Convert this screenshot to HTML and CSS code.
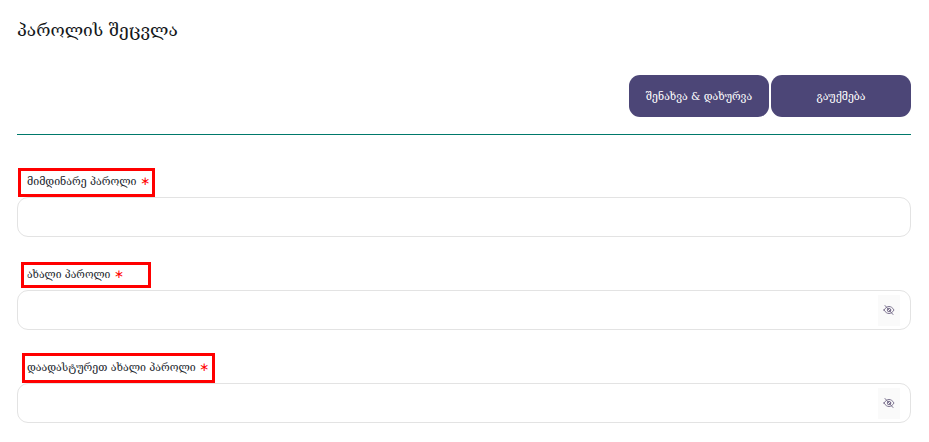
FILE: index.html
```html
<!DOCTYPE html>
<html lang="ka">
<head>
<meta charset="utf-8">
<title>პაროლის შეცვლა</title>
<link rel="stylesheet" href="styles.css">
</head>
<body>
<main class="page">
  <h1 class="title">პაროლის შეცვლა</h1>
  <div class="actions">
    <button class="btn" type="button">შენახვა &amp; დახურვა</button>
    <button class="btn" type="button">გაუქმება</button>
  </div>
  <hr class="rule">
  <form class="form">
    <div class="field first">
      <label class="label">მიმდინარე პაროლი <span class="req">∗</span></label>
      <div class="input"></div>
      <span class="mark mark-a"></span>
    </div>
    <div class="field second">
      <label class="label">ახალი პაროლი <span class="req">∗</span></label>
      <div class="input">
        <span class="eye"><svg viewBox="0 0 24 24" width="12" height="12" fill="none" stroke="#6f6585" stroke-width="1.800" stroke-linecap="round"><path d="M2 12c3-5 6.500-7 10-7s7 2 10 7c-3 5-6.500 7-10 7s-7-2-10-7z"/><circle cx="12" cy="12" r="3.500"/><path d="M4 3l16 18"/></svg></span>
      </div>
      <span class="mark mark-b"></span>
    </div>
    <div class="field third">
      <label class="label">დაადასტურეთ ახალი პაროლი <span class="req">∗</span></label>
      <div class="input">
        <span class="eye"><svg viewBox="0 0 24 24" width="12" height="12" fill="none" stroke="#6f6585" stroke-width="1.800" stroke-linecap="round"><path d="M2 12c3-5 6.500-7 10-7s7 2 10 7c-3 5-6.500 7-10 7s-7-2-10-7z"/><circle cx="12" cy="12" r="3.500"/><path d="M4 3l16 18"/></svg></span>
      </div>
      <span class="mark mark-c"></span>
    </div>
  </form>
</main>
</body>
</html>
```
FILE: styles.css
```css
* { box-sizing: border-box; }
html, body { margin: 0; padding: 0; background: #fff; }
body { font-family: "DejaVu Serif", "DejaVu Sans", serif; color: #212529; overflow: hidden; }
.page { width: 929px; height: 442px; padding: 19px 18px 0 17px; }
.title { margin: 0; font-size: 17.3px; font-weight: 400; line-height: 22px; height: 22px; color: #14171a; }
.actions { display: flex; justify-content: flex-end; gap: 2px; margin-top: 34px; }
.btn { width: 140px; height: 42px; border: 0; border-radius: 11px; background: #4c4677; color: #fff; font: inherit; font-size: 10.5px; padding: 0; }
.rule { margin: 17px 0 0; border: 0; height: 1px; background: #00796b; }
.form { display: flex; flex-direction: column; }
.field { position: relative; display: flex; flex-direction: column; }
.first { margin-top: 34px; }
.second { margin-top: 25px; }
.third { margin-top: 25px; }
.label { display: block; height: 28px; line-height: 25px; font-size: 10.6px; padding-left: 10px; color: #23272e; }
.second .label { font-size: 10.4px; }
.req { color: #f00; font-family: "DejaVu Sans", sans-serif; font-size: 12px; line-height: 1; }
.input { height: 40px; border: 1px solid #e3e3e3; border-radius: 11px; background: #fff; display: flex; align-items: center; justify-content: flex-end; padding-right: 10px; }
.eye { width: 22px; height: 31px; background: #fafafa; display: flex; align-items: center; justify-content: center; }
.mark { position: absolute; border: 3px solid #f00; pointer-events: none; }
.mark-a { left: 1px; top: -1px; width: 137px; height: 29px; }
.mark-b { left: 4px; top: 0; width: 130px; height: 26px; }
.mark-c { left: 5px; top: -2px; width: 193px; height: 30px; }
```
